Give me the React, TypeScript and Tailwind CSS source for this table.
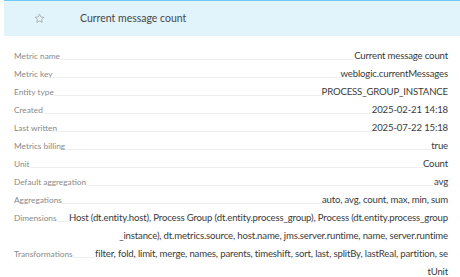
const rows: { label: string; value: string; lead?: string }[] = [
  { label: "Metric name", value: "Current message count" },
  { label: "Metric key", value: "weblogic.currentMessages" },
  { label: "Entity type", value: "PROCESS_GROUP_INSTANCE" },
  { label: "Created", value: "2025-02-21 14:18" },
  { label: "Last written", value: "2025-07-22 15:18" },
  { label: "Metrics billing", value: "true" },
  { label: "Unit", value: "Count" },
  { label: "Default aggregation", value: "avg" },
  { label: "Aggregations", value: "auto, avg, count, max, min, sum" },
  {
    label: "Dimensions",
    value:
      "Host (dt.entity.host), Process Group (dt.entity.process_group), Process (dt.entity.process_group_instance), dt.metrics.source, host.name, jms.server.runtime, name, server.runtime",
    lead: "min-w-[11px]",
  },
  {
    label: "Transformations",
    value:
      "filter, fold, limit, merge, names, parents, timeshift, sort, last, splitBy, lastReal, partition, setUnit",
    lead: "min-w-[21.5px]",
  },
];

function StarIcon() {
  return (
    <svg width="11" height="11" viewBox="0 0 24 24" fill="none" stroke="#a8a8a8" strokeWidth="1.8" strokeLinejoin="round">
      <path d="M12 2.5l2.9 6.1 6.6.8-4.9 4.6 1.3 6.6L12 17.3l-5.9 3.3 1.3-6.6-4.9-4.6 6.6-.8z" />
    </svg>
  );
}

export default function App() {
  return (
    <div className="w-[460px] h-[277px] overflow-hidden bg-white font-['Lato',sans-serif]">
      <div className="ml-[4px] h-[36px] border-t border-[#6fcaf5] bg-[#e1f3fb] flex items-center">
        <div className="w-[70px] flex justify-center">
          <StarIcon />
        </div>
        <span className="pl-[6px] text-[10.5px] text-[#474747]">Current message count</span>
      </div>
      <div className="pt-[11px] pl-[14px] pr-[12px]">
        {rows.map(({ label, value, lead }) => (
          <div key={label} className="flex items-start leading-[18px]">
            <span className="shrink-0 text-[8.3px] text-[#8a8a8a]">{label}</span>
            <span className={`flex-1 h-[13px] border-b border-[#eeeeee] ${lead ?? "min-w-[16px]"}`} />
            <span className="min-w-0 text-right break-all text-[9.6px] tracking-[-0.16px] text-[#3a3a3a]">{value}</span>
          </div>
        ))}
      </div>
    </div>
  );
}
